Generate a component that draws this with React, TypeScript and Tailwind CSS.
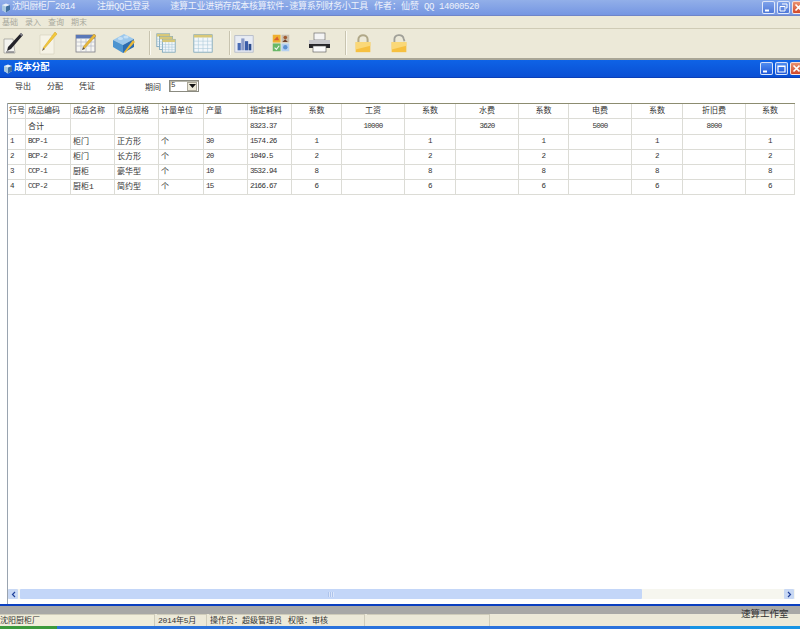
const header = ['行号', '成品编码', '成品名称', '成品规格', '计量单位', '产量', '指定耗料', '系数', '工资', '系数', '水费', '系数', '电费', '系数', '折旧费', '系数'];

const rows = [
  ['', '合计', '', '', '', '', '8323.37', '', '10000', '', '3620', '', '5000', '', '8000', ''],
  ['1', 'BCP-1', '柜门', '正方形', '个', '30', '1574.26', '1', '', '1', '', '1', '', '1', '', '1'],
  ['2', 'BCP-2', '柜门', '长方形', '个', '20', '1049.5', '2', '', '2', '', '2', '', '2', '', '2'],
  ['3', 'CCP-1', '厨柜', '豪华型', '个', '10', '3532.94', '8', '', '8', '', '8', '', '8', '', '8'],
  ['4', 'CCP-2', '厨柜1', '简约型', '个', '15', '2166.67', '6', '', '6', '', '6', '', '6', '', '6'],
];

const gridCols = 'grid grid-cols-[18px_45px_44px_44px_45px_44px_44px_50px_63px_51px_63px_50px_63px_51px_63px_49px]';

function WinButton({ kind, tone }: { kind: 'min' | 'restore' | 'max' | 'close'; tone: 'pale' | 'strong' }) {
  const bg =
    kind === 'close'
      ? 'bg-gradient-to-b from-[#e9906f] to-[#d0472a]'
      : tone === 'pale'
        ? 'bg-gradient-to-b from-[#7fa2ea] to-[#4f78d8]'
        : 'bg-gradient-to-b from-[#4f8cf0] to-[#1f57d8]';
  return (
    <div className={`flex h-[13px] w-[13px] items-center justify-center rounded-[2px] border border-white/80 ${bg}`}>
      <svg viewBox="0 0 11 11" className="h-[11px] w-[11px]" fill="none" stroke="white">
        {kind === 'min' && <path d="M2 8.5h4" strokeWidth="2" />}
        {kind === 'max' && <path d="M2 3h7v6H2z M2 3.5h7" strokeWidth="1.2" />}
        {kind === 'restore' && <path d="M4 2h5v4H8 M2 4.5h5v4.5H2z" strokeWidth="1" />}
        {kind === 'close' && <path d="M2.5 2.5l6 6M8.5 2.5l-6 6" strokeWidth="1.6" />}
      </svg>
    </div>
  );
}

function AppGlyph() {
  return (
    <svg viewBox="0 0 10 10" className="h-[10px] w-[10px] shrink-0">
      <path d="M1 2l4-1.5L9 2v5L5 9.5 1 7z" fill="#e8f0fa" />
      <path d="M5 3.5L9 2v5L5 9.5z" fill="#3f6f9f" />
      <path d="M1 2l4 1.5V9.5L1 7z" fill="#a8c8e0" />
    </svg>
  );
}

function IconPen() {
  return (
    <svg viewBox="0 0 24 24" className="h-full w-full">
      <path d="M3 8h9l2 14H3z" fill="#f4f4f0" stroke="#9a9a94" strokeWidth="0.7" />
      <path d="M20 2L7 16l-1 4 4-2L22 4z" fill="#23232a" />
      <path d="M20 2l2 2-2 1-1-2z" fill="#8b8b94" />
      <path d="M5 21h8" stroke="#55555c" strokeWidth="1" />
    </svg>
  );
}

function IconNote() {
  return (
    <svg viewBox="0 0 24 24" className="h-full w-full">
      <path d="M4 4h11l3 3v16H4z" fill="#f6f3e6" stroke="#d8d4c0" strokeWidth="0.7" />
      <path d="M7 17l1 1 13-15-2-2z" fill="#f2c83a" stroke="#d2a020" strokeWidth="0.5" />
      <path d="M6 20l1-3 2 1z" fill="#7a6a50" />
    </svg>
  );
}

function IconTableEdit() {
  return (
    <svg viewBox="0 0 24 24" className="h-full w-full">
      <rect x="2" y="4" width="19" height="17" fill="#f6f6f2" stroke="#7c7c84" strokeWidth="0.8" />
      <rect x="2" y="4" width="19" height="3.5" fill="#5a78b8" />
      <path d="M2 11h19M2 15h19M7 7v14M12 7v14M17 7v14" stroke="#b4b8c4" strokeWidth="0.7" />
      <path d="M9 16l1 2 12-13-2-2z" fill="#e8b83a" stroke="#b88c20" strokeWidth="0.4" />
      <path d="M8 19l1-3 2 2z" fill="#5a5040" />
    </svg>
  );
}

function IconBlock() {
  return (
    <svg viewBox="0 0 24 24" className="h-full w-full">
      <path d="M1 9l11-6 10 5-11 6z" fill="#9cc8ec" />
      <path d="M1 9l10 5v8L1 16z" fill="#4c94d0" />
      <path d="M11 14l11-6v8l-11 6z" fill="#2c6cb0" />
      <ellipse cx="8.5" cy="7.5" rx="2.6" ry="1.5" fill="#c4e0f6" />
      <ellipse cx="14" cy="6" rx="2.6" ry="1.5" fill="#c4e0f6" />
      <path d="M12 21l1 1 10-11-2-2z" fill="#e8b83a" />
    </svg>
  );
}

function MiniTable({ x, y, w, h }: { x: number; y: number; w: number; h: number }) {
  const cx = [1, 2, 3].map((i) => x + (w * i) / 4);
  const cy = [1, 2, 3].map((i) => y + 3 + ((h - 3) * i) / 4);
  return (
    <g>
      <rect x={x} y={y} width={w} height={h} fill="#f2f7fa" stroke="#6a9ab4" strokeWidth="0.8" />
      <rect x={x} y={y} width={w} height="3" fill="#d8c878" />
      {cx.map((v) => (
        <path key={v} d={`M${v} ${y + 3}V${y + h}`} stroke="#a8c8d8" strokeWidth="0.6" />
      ))}
      {cy.map((v) => (
        <path key={v} d={`M${x} ${v}H${x + w}`} stroke="#a8c8d8" strokeWidth="0.6" />
      ))}
    </g>
  );
}

function IconStack() {
  return (
    <svg viewBox="0 0 24 24" className="h-full w-full">
      <MiniTable x={2} y={2} w={14} h={14} />
      <MiniTable x={5} y={5} w={14} h={14} />
      <MiniTable x={8} y={8} w={14} h={14} />
    </svg>
  );
}

function IconGrid() {
  return (
    <svg viewBox="0 0 24 24" className="h-full w-full">
      <MiniTable x={2} y={3} w={20} h={19} />
    </svg>
  );
}

function IconChart() {
  return (
    <svg viewBox="0 0 24 24" className="h-full w-full">
      <rect x="2" y="4" width="20" height="18" fill="#e8ecf4" stroke="#a8b0c4" strokeWidth="0.8" />
      <rect x="5" y="12" width="3.5" height="8" fill="#4a6cb4" />
      <rect x="9" y="7" width="3.5" height="13" fill="#8c9cc8" />
      <rect x="13" y="10" width="3.5" height="10" fill="#3a5ca8" />
      <rect x="17" y="13" width="3" height="7" fill="#2c4c8c" />
    </svg>
  );
}

function IconTiles() {
  return (
    <svg viewBox="0 0 24 24" className="h-full w-full">
      <rect x="3" y="3" width="8.5" height="8.5" fill="#eeb030" />
      <path d="M4 9l4-4 2 4z" fill="#d86030" />
      <rect x="12.5" y="3" width="8.5" height="8.5" fill="#c8c0b0" />
      <circle cx="16.7" cy="6" r="2" fill="#a05a30" />
      <path d="M13.5 11l3-3 3 3z" fill="#704028" />
      <rect x="3" y="12.5" width="8.5" height="8.5" fill="#68b868" />
      <path d="M5 17l2 2 3-4" fill="none" stroke="#f0f8f0" strokeWidth="1.2" />
      <rect x="12.5" y="12.5" width="8.5" height="8.5" fill="#b4d0f0" />
      <circle cx="16.7" cy="16.7" r="2.4" fill="#5c90d0" />
    </svg>
  );
}

function IconPrinter() {
  return (
    <svg viewBox="0 0 24 24" className="h-full w-full">
      <rect x="7" y="2" width="11" height="7" fill="#f4f4f4" stroke="#707070" strokeWidth="0.7" />
      <path d="M2 9h21v7H2z" fill="#c8c8cc" />
      <path d="M2 13h21v4H2z" fill="#26262a" />
      <rect x="6" y="15" width="13" height="6" fill="#fafafa" stroke="#505050" strokeWidth="0.6" />
    </svg>
  );
}

function IconLock({ open }: { open?: boolean }) {
  return (
    <svg viewBox="0 0 24 24" className="h-full w-full">
      {open ? (
        <path d="M7 11V8c0-6 9-6 10-1l1 3" fill="none" stroke="#a0a098" strokeWidth="2" />
      ) : (
        <path d="M7 11V8c0-6 10-6 10 0v3" fill="none" stroke="#b0a888" strokeWidth="2.2" />
      )}
      <rect x="4" y="11" width="16" height="11" fill="#f6c040" />
      <path d="M4 11h16v4L4 19z" fill="#fad878" />
    </svg>
  );
}

function ToolSep() {
  return <div className="h-[24px] w-[2px] border-l border-r border-l-[#c8c4b0] border-r-[#fbfaf2]" />;
}

export default function App() {
  return (
    <div className="relative flex h-[629px] w-[800px] flex-col overflow-hidden bg-[#ece9d8] font-['Liberation_Mono','Noto_Sans_CJK_SC',monospace] text-[8px] text-[#333]">
      {/* main window title */}
      <div className="flex h-[16px] shrink-0 items-center border-b border-[#6f85c8] bg-gradient-to-b from-[#92afe9] to-[#7596e2] pl-[1px] text-[9px] leading-none text-[#eef2fb]">
        <AppGlyph />
        <span className="ml-[1px] tracking-[-0.4px] whitespace-nowrap">沈阳厨柜厂2014</span>
        <span className="ml-[22px] tracking-[-0.5px] whitespace-nowrap">注册QQ已登录</span>
        <span className="ml-[21px] tracking-[-0.25px] whitespace-nowrap">速算工业进销存成本核算软件-速算系列财务小工具</span>
        <span className="ml-[6px] whitespace-nowrap">作者：仙赞</span>
        <span className="ml-[5px] tracking-[-0.4px] whitespace-nowrap">QQ 14000520</span>
        <div className="ml-auto -mr-[5px] flex gap-[2px]">
          <WinButton kind="min" tone="pale" />
          <WinButton kind="restore" tone="pale" />
          <WinButton kind="close" tone="pale" />
        </div>
      </div>

      {/* menu */}
      <div className="flex h-[13px] shrink-0 items-center gap-[7px] border-b border-[#cfcbb6] pt-[1px] pl-[2px] text-[8px] leading-none text-[#a8a89c]">
        <span>基础</span>
        <span>录入</span>
        <span>查询</span>
        <span>期末</span>
      </div>

      {/* toolbar */}
      <div className="flex h-[31px] shrink-0 items-center border-b-2 border-[#a9a696] pb-[1px] pl-[1px]">
        <div className="h-[24px] w-[24px]"><IconPen /></div>
        <div className="ml-[11px] h-[24px] w-[24px]"><IconNote /></div>
        <div className="ml-[14px] h-[24px] w-[24px]"><IconTableEdit /></div>
        <div className="ml-[14px] h-[24px] w-[24px]"><IconBlock /></div>
        <div className="ml-[13px]"><ToolSep /></div>
        <div className="ml-[4px] h-[22px] w-[22px]"><IconStack /></div>
        <div className="ml-[15px] h-[22px] w-[22px]"><IconGrid /></div>
        <div className="ml-[15px]"><ToolSep /></div>
        <div className="ml-[2px] h-[22px] w-[22px]"><IconChart /></div>
        <div className="ml-[15px] h-[22px] w-[22px]"><IconTiles /></div>
        <div className="ml-[15px] h-[24px] w-[24px]"><IconPrinter /></div>
        <div className="ml-[14px]"><ToolSep /></div>
        <div className="ml-[5px] h-[22px] w-[22px]"><IconLock /></div>
        <div className="ml-[14px] h-[22px] w-[22px]"><IconLock open /></div>
      </div>

      {/* child window */}
      <div className="flex h-[18px] shrink-0 items-center border-b border-[#0a3fb8] bg-gradient-to-b from-[#0f63e6] to-[#0a4fd4] pl-[3px] text-[9px] leading-none font-bold tracking-[-0.2px] text-white">
        <AppGlyph />
        <span className="ml-[1px]">成本分配</span>
        <div className="ml-auto -mr-[3px] flex gap-[2px]">
          <WinButton kind="min" tone="strong" />
          <WinButton kind="max" tone="strong" />
          <WinButton kind="close" tone="strong" />
        </div>
      </div>

      <div className="flex min-h-0 flex-1 flex-col bg-white">
        {/* form toolbar */}
        <div className="flex h-[25px] shrink-0 items-start pt-[2px] text-[8px] leading-none">
          <span className="ml-[15px] mt-[3px]">导出</span>
          <span className="ml-[16px] mt-[3px]">分配</span>
          <span className="ml-[16px] mt-[3px]">凭证</span>
          <span className="ml-[50px] mt-[4px]">期间</span>
          <div className="ml-[8px] flex h-[12px] w-[30px] items-center justify-between border border-[#8a8a80] bg-white px-[1px] shadow-[inset_1px_1px_0_#b8b8ac]">
            <span className="text-[7.5px] tracking-[-0.7px]">5</span>
            <div className="flex h-[9px] w-[10px] items-center justify-center border border-[#aca899] bg-[#ece9d8]">
              <svg viewBox="0 0 7 4" className="h-[4px] w-[7px]">
                <path d="M0 0h7L3.5 4z" fill="#111" />
              </svg>
            </div>
          </div>
        </div>

        {/* grid */}
        <div className="ml-[7px] mr-[5px] flex min-h-0 flex-1 flex-col border-l border-[#9aa4b0]">
          <div className="flex-1">
            <div className={`${gridCols} h-[16px] border-t border-[#8c8c70] leading-none`}>
              {header.map((text, col) => (
                <div
                  key={col}
                  className={`flex items-center overflow-hidden whitespace-nowrap border-r border-b border-[#dcdcd6] ${col === 0 ? 'pl-[1px]' : col >= 7 ? 'justify-center' : 'pl-[2px]'}`}
                >
                  {text}
                </div>
              ))}
            </div>
            {rows.map((row, r) => (
              <div key={r} className={`${gridCols} ${r === 0 ? 'h-[16px]' : 'h-[15px]'} leading-none`}>
                {row.map((text, col) => {
                  const latin = /^[A-Za-z0-9.\-]+$/.test(text);
                  return (
                    <div
                      key={col}
                      className={`flex items-center overflow-hidden whitespace-nowrap border-r border-b border-[#dcdcd6] ${col >= 7 ? 'justify-center' : 'pl-[2px]'} ${latin ? 'text-[7.5px] tracking-[-0.7px]' : ''}`}
                    >
                      {text}
                    </div>
                  );
                })}
              </div>
            ))}
          </div>

          {/* horizontal scrollbar */}
          <div className="mb-[5px] flex h-[10px] shrink-0 items-center bg-[#f6f6ef]">
            <div className="flex h-[10px] w-[10px] items-center justify-center rounded-[1px] bg-[#c8d8f4] text-[#20409a]">
              <svg viewBox="0 0 5 7" className="h-[7px] w-[5px]" fill="none" stroke="currentColor" strokeWidth="1.2">
                <path d="M4 1L1.5 3.5 4 6" />
              </svg>
            </div>
            <div className="ml-[2px] flex h-[10px] w-[622px] items-center justify-center rounded-[1px] bg-[#c3d6f8]">
              <div className="h-[5px] w-[6px] bg-[repeating-linear-gradient(90deg,#aec4ec_0,#aec4ec_1px,#dbe6fa_1px,#dbe6fa_2px)]" />
            </div>
            <div className="ml-auto mr-[1px] flex h-[10px] w-[10px] items-center justify-center rounded-[1px] bg-[#c8d8f4] text-[#20409a]">
              <svg viewBox="0 0 5 7" className="h-[7px] w-[5px]" fill="none" stroke="currentColor" strokeWidth="1.2">
                <path d="M1 1l2.5 2.5L1 6" />
              </svg>
            </div>
          </div>
        </div>
      </div>

      {/* child window bottom edge */}
      <div className="h-[2px] shrink-0 bg-[#0a3fc0]" />
      <div className="h-[8px] shrink-0 bg-[#a8a8a6]" />

      {/* status bar */}
      <div className="flex h-[12px] shrink-0 items-center gap-[2px] bg-[#ece9d8] text-[8px] leading-none">
        <div className="flex h-full w-[155px] items-center border-t border-r border-[#cfccba] bg-[#f0edda]">沈阳厨柜厂</div>
        <div className="flex h-full w-[50px] items-center border-t border-r border-[#cfccba] pl-[1px]">
          <span className="tracking-[-0.3px]">2014年5月</span>
        </div>
        <div className="flex h-full w-[156px] items-center border-t border-r border-[#cfccba] pl-[1px]">
          <span>操作员：超级管理员</span>
          <span className="ml-[6px]">权限：审核</span>
        </div>
        <div className="h-full w-[123px] border-t border-r border-[#cfccba]" />
      </div>

      {/* taskbar strip */}
      <div className="flex h-[3px] shrink-0">
        <div className="w-[57px] bg-[#3c9a3c]" />
        <div className="w-[633px] bg-[#2a72dc]" />
        <div className="flex-1 bg-[#1794e4]" />
      </div>

      {/* label sits over the gray band and status bar */}
      <span className="absolute top-[610px] left-[741px] text-[9.5px] leading-none text-[#333]">速算工作室</span>
    </div>
  );
}
